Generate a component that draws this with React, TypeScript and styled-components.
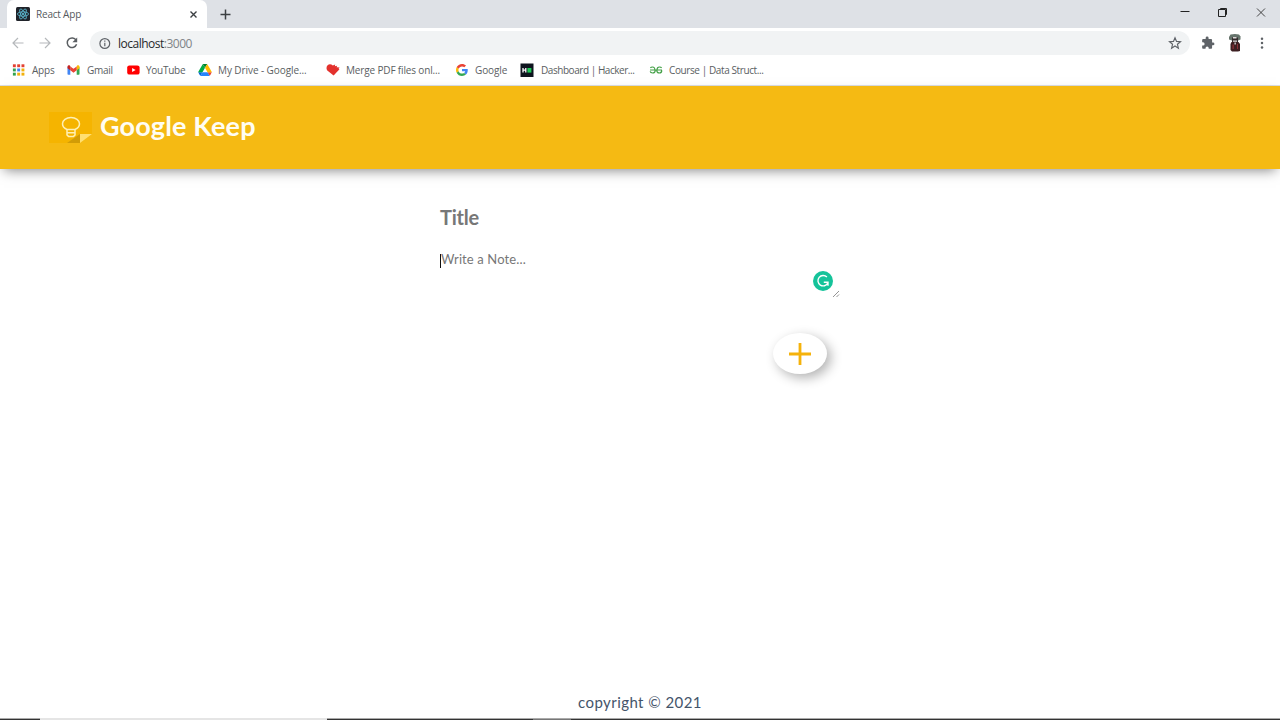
import React from "react";
import styled, { createGlobalStyle } from "styled-components";

const GlobalStyle = createGlobalStyle`
  * { box-sizing: border-box; }
  body { margin: 0; background: #fff; overflow: hidden; }
`;

const Window = styled.div`
  width: 1280px;
  height: 720px;
  display: flex;
  flex-direction: column;
  background: #fff;
  font-family: "Open Sans", "Noto Sans", sans-serif;
`;

const TabStrip = styled.div`
  height: 28px;
  display: flex;
  align-items: stretch;
  background: #dee1e6;
  flex: none;
`;

const Tab = styled.div`
  width: 200px;
  margin-left: 7px;
  padding: 0 9px;
  display: flex;
  align-items: center;
  background: #fff;
  border-radius: 7px 7px 0 0;
`;

const TabTitle = styled.span`
  flex: 1;
  margin-left: 6px;
  font-size: 10px;
  letter-spacing: -0.2px;
  line-height: 14px;
  color: #55595d;
`;

const NewTab = styled.div`
  width: 36px;
  display: flex;
  align-items: center;
  justify-content: center;
`;

const WindowButtons = styled.div`
  margin-left: auto;
  padding: 6px 13px 0 0;
  display: flex;
  gap: 26px;
`;

const Toolbar = styled.div`
  height: 30px;
  flex: none;
  display: flex;
  align-items: center;
  padding: 0 11px;
`;

const NavButtons = styled.div`
  display: flex;
  gap: 13px;
  width: 79px;
`;

const AddressBar = styled.div`
  width: 1100px;
  height: 24px;
  border-radius: 12px;
  background: #f1f3f4;
  display: flex;
  align-items: center;
  padding: 0 8px;
`;

const Address = styled.span`
  flex: 1;
  margin: 1px 0 0 7px;
  font-size: 12px;
  letter-spacing: -0.5px;
  line-height: 18px;
  color: #27292c;
`;

const Port = styled.span`
  color: #808488;
`;

const ToolbarActions = styled.div`
  flex: 1;
  display: flex;
  align-items: center;
  justify-content: space-between;
  padding-left: 11px;
`;

const BookmarksBar = styled.div`
  height: 28px;
  flex: none;
  display: flex;
  align-items: center;
  padding: 0 0 4px 12px;
  border-bottom: 1px solid #dcdfe4;
`;

const Bookmark = styled.div<{ $width: number; $gap: number; $track: number }>`
  width: ${(p) => p.$width}px;
  flex: none;
  display: flex;
  align-items: center;
  gap: ${(p) => p.$gap}px;
  font-size: 10px;
  letter-spacing: ${(p) => p.$track}px;
  line-height: 14px;
  white-space: nowrap;
  color: #5a5e62;
  svg { flex: none; }
`;

const Header = styled.header`
  height: 83px;
  flex: none;
  display: flex;
  align-items: center;
  gap: 8px;
  padding: 0 49px;
  background: #f5ba13;
  box-shadow: 0 5px 12px -4px rgba(0, 0, 0, 0.5);
`;

const BrandName = styled.h1`
  margin: -4px 0 0;
  font: 700 27px/34px Lato, sans-serif;
  letter-spacing: 0.15px;
  color: #fffdf3;
`;

const Main = styled.main`
  flex: 1;
  display: flex;
  justify-content: center;
`;

const NoteForm = styled.div`
  width: 400px;
  padding-top: 35px;
  display: flex;
  flex-direction: column;
`;

const TitleField = styled.div`
  font: 700 20px/26px Lato, sans-serif;
  letter-spacing: -0.2px;
  color: #777;
`;

const NoteField = styled.div`
  position: relative;
  height: 48px;
  margin-top: 20px;
  display: flex;
  align-items: flex-start;
  font: 400 13px/18px Lato, sans-serif;
  letter-spacing: 0.12px;
  color: #777;
`;

const Caret = styled.span`
  width: 1px;
  height: 14px;
  margin-top: 4px;
  background: #111;
`;

const Grammarly = styled.svg`
  position: absolute;
  right: 7px;
  bottom: 7px;
`;

const ResizeGrip = styled.svg`
  position: absolute;
  right: 0;
  bottom: 0;
`;

const AddButton = styled.div`
  width: 54px;
  height: 41px;
  margin: 35px 13px 0 auto;
  border-radius: 50%;
  background: #fff;
  box-shadow: 4px 4px 12px rgba(0, 0, 0, 0.3);
  display: flex;
  align-items: center;
  justify-content: center;
`;

const Footer = styled.footer`
  height: 25px;
  flex: none;
  text-align: center;
  font: 400 15px/18px Lato, sans-serif;
  letter-spacing: 0.44px;
  color: #44546a;
`;

const TaskbarEdge = styled.div`
  height: 2px;
  flex: none;
  display: flex;
  background: #333;
  border-top: 1px solid #aaa;
`;

const TaskbarSearch = styled.div`
  width: 287px;
  height: 2px;
  margin: -1px 0 0 40px;
  background: #e5e5e5;
`;

const TaskbarActiveApp = styled.div`
  width: 38px;
  height: 1px;
  margin-left: 206px;
  background: #777;
`;

const ReactIcon = () => (
  <svg width="14" height="14" viewBox="0 0 14 14">
    <rect width="14" height="14" rx="1.5" fill="#20232a" />
    <g fill="none" stroke="#61c6df" strokeWidth="0.75">
      <ellipse cx="7" cy="7" rx="5.6" ry="2.2" />
      <ellipse cx="7" cy="7" rx="5.6" ry="2.2" transform="rotate(60 7 7)" />
      <ellipse cx="7" cy="7" rx="5.6" ry="2.2" transform="rotate(120 7 7)" />
    </g>
    <circle cx="7" cy="7" r="1.1" fill="#61c6df" />
  </svg>
);

const dots = ["#e34133", "#e34133", "#e34133", "#32a350", "#4285f4", "#f2b10c", "#32a350", "#f2b10c", "#f2b10c"];
const AppsIcon = () => (
  <svg width="13" height="12" viewBox="0 0 13 12">
    {dots.map((c, i) => (
      <rect key={i} x={0.9 + (i % 3) * 4.3} y={0.3 + Math.floor(i / 3) * 4.2} width="2.9" height="2.9" fill={c} />
    ))}
  </svg>
);

const GmailIcon = () => (
  <svg width="13" height="10" viewBox="0 0 13 10">
    <path d="M.5 2v7c0 .5.3.8.8.8h2V4.3z" fill="#4285f4" />
    <path d="M12.5 2v7c0 .5-.3.8-.8.8h-2V4.3z" fill="#34a853" />
    <path d="M9.7 1.4v3.9l2.8-2.1V1.7c0-1.4-1.5-1.9-2.4-1.2z" fill="#fbbc04" />
    <path d="M3.3 5.3V1.4l3.2 2.4 3.2-2.4v3.9L6.5 7.7z" fill="#ea4335" />
    <path d="M.5 1.7v1.5l2.8 2.1V1.4L2.9.5C2-.2.5.3.5 1.7z" fill="#c5221f" />
  </svg>
);

const YouTubeIcon = () => (
  <svg width="13" height="10" viewBox="0 0 13 10">
    <rect x=".2" y=".4" width="12.4" height="9.2" rx="2.2" fill="#f00" />
    <path d="M5.1 3v4l3.5-2z" fill="#fff" />
  </svg>
);

const DriveIcon = () => (
  <svg width="14" height="12" viewBox="0 0 87.3 78">
    <path d="m6.6 66.85 3.85 6.65c.8 1.4 1.95 2.5 3.3 3.3l13.75-23.8h-27.5c0 1.55.4 3.1 1.2 4.5z" fill="#0066da" />
    <path d="m43.65 25-13.75-23.8c-1.35.8-2.5 1.9-3.3 3.3l-25.4 44a9 9 0 0 0-1.2 4.5h27.5z" fill="#00ac47" />
    <path d="m73.55 76.8c1.35-.8 2.5-1.9 3.3-3.3l1.6-2.75 7.65-13.25c.8-1.4 1.2-2.95 1.2-4.5h-27.5l5.85 11.5z" fill="#ea4335" />
    <path d="m43.65 25 13.75-23.8c-1.35-.8-2.9-1.2-4.5-1.2h-18.5c-1.6 0-3.15.45-4.5 1.2z" fill="#00832d" />
    <path d="m59.8 53h-32.3l-13.75 23.8c1.35.8 2.9 1.2 4.5 1.2h50.8c1.6 0 3.15-.45 4.5-1.2z" fill="#2684fc" />
    <path d="m73.4 26.5-12.7-22c-.8-1.4-1.95-2.5-3.3-3.3l-13.75 23.8 16.15 28h27.45c0-1.55-.4-3.1-1.2-4.5z" fill="#ffba00" />
  </svg>
);

const MergeIcon = () => (
  <svg width="14" height="12" viewBox="0 0 14 12">
    <path d="M1.6 1.2C3-.1 5.2 0 6.8 1.4L9.2.6l-.4 1.6 2.4-.4-.6 1.5 3 .1-1.100 1.500 1 .4-5.900 6.300-6-4.800C.2 5.600.1 2.700 1.600 1.200z" fill="#e3312d" />
  </svg>
);

const GoogleIcon = () => (
  <svg width="12" height="12" viewBox="0 0 48 48">
    <path fill="#EA4335" d="M24 9.5c3.54 0 6.71 1.22 9.21 3.6l6.85-6.85C35.9 2.38 30.47 0 24 0 14.62 0 6.51 5.38 2.56 13.22l7.98 6.19C12.43 13.72 17.74 9.5 24 9.5z" />
    <path fill="#4285F4" d="M46.98 24.55c0-1.57-.15-3.09-.38-4.55H24v9.02h12.94c-.58 2.96-2.26 5.48-4.78 7.18l7.73 6c4.51-4.18 7.09-10.36 7.09-17.65z" />
    <path fill="#FBBC05" d="M10.53 28.59A14.5 14.5 0 0 1 9.77 24c0-1.6.27-3.14.76-4.59l-7.98-6.19A23.9 23.9 0 0 0 0 24c0 3.88.92 7.54 2.56 10.78z" />
    <path fill="#34A853" d="M24 48c6.48 0 11.93-2.13 15.89-5.81l-7.73-6c-2.15 1.45-4.92 2.3-8.16 2.3-6.26 0-11.57-4.22-13.47-9.91l-7.98 6.19C6.51 42.62 14.62 48 24 48z" />
  </svg>
);

const HackerIcon = () => (
  <svg width="14" height="14" viewBox="0 0 14 14">
    <rect x=".5" y=".5" width="13" height="13.5" fill="#0e141e" />
    <path d="M3 5v4.500M5.800 5v4.500M3 7.200h3" stroke="#fff" strokeWidth="1.3" />
    <rect x="7.4" y="5" width="4" height="4.600" fill="#1ecb57" />
  </svg>
);

const GeeksIcon = () => (
  <svg width="14" height="8" viewBox="0 0 14 8" fill="none" stroke="#43a047" strokeWidth="1.2">
    <path d="M1 4h12M6.3 4c0 2-1 3-2.6 3S1.3 6.2 1.2 5.4M5.9 4C5.9 2 5 1 3.6 1S1.7 1.5 1.4 2.1M7.7 4c0 2 1 3 2.6 3s2.4-.8 2.5-2.6M8 4c0-2 1-3 2.4-3s1.9.5 2.2 1.1" />
  </svg>
);

const KeepIcon = () => (
  <svg width="43" height="31" viewBox="0 0 43 31">
    <path d="M0 0h43v22L31 31H0z" fill="#f5b400" />
    <path d="M31 22v9H18z" fill="#d29c06" />
    <path d="M31 22h12L31 31z" fill="#ffdf72" />
    <g fill="none" stroke="#fff0b4" strokeWidth="1.500">
      <path d="M18 17.500C15.200 16.300 13.500 14.200 13.500 11.800c0-3.500 3.700-6.200 8.500-6.200s8.500 2.700 8.500 6.200c0 2.400-1.700 4.500-4.500 5.700z" />
      <path d="M18 17v6l1.500 1.400h5L26 23v-6M18 20.800h8" />
    </g>
  </svg>
);

const bookmarks = [
  { label: "Apps", icon: <AppsIcon />, width: 55, gap: 7, track: -0.2 },
  { label: "Gmail", icon: <GmailIcon />, width: 60, gap: 7, track: -0.25 },
  { label: "YouTube", icon: <YouTubeIcon />, width: 71, gap: 6, track: -0.27 },
  { label: "My Drive - Google...", icon: <DriveIcon />, width: 128, gap: 6, track: -0.08 },
  { label: "Merge PDF files onl...", icon: <MergeIcon />, width: 130, gap: 6, track: -0.15 },
  { label: "Google", icon: <GoogleIcon />, width: 64, gap: 7, track: -0.1 },
  { label: "Dashboard | Hacker...", icon: <HackerIcon />, width: 129, gap: 7, track: -0.45 },
  { label: "Course | Data Struct...", icon: <GeeksIcon />, width: 120, gap: 6, track: -0.4 },
];

export default function App() {
  return (
    <Window>
      <GlobalStyle />
      <TabStrip>
        <Tab>
          <ReactIcon />
          <TabTitle>React App</TabTitle>
          <svg width="9" height="9" viewBox="0 0 9 9" stroke="#3c4043" strokeWidth="1.4"><path d="M1.5 1.5l6 6M7.5 1.5l-6 6" /></svg>
        </Tab>
        <NewTab>
          <svg width="11" height="11" viewBox="0 0 11 11" stroke="#3c4043" strokeWidth="1.5"><path d="M5.5 .5v10M.5 5.5h10" /></svg>
        </NewTab>
        <WindowButtons>
          <svg width="12" height="12" viewBox="0 0 12 12" stroke="#222"><path d="M1.500 5.5h9" /></svg>
          <svg width="12" height="12" viewBox="0 0 12 12" fill="none" stroke="#222"><path d="M1.5 3.5h7v7h-7zM3.500 3V2.500h6v6H9" /></svg>
          <svg width="12" height="12" viewBox="0 0 12 12" stroke="#333" strokeWidth=".9"><path d="M2 2.5l8 8M10 2.5l-8 8" /></svg>
        </WindowButtons>
      </TabStrip>
      <Toolbar>
        <NavButtons>
          <svg width="14" height="14" viewBox="0 0 14 14" fill="none" stroke="#b5b8bb" strokeWidth="1.2"><path d="M12.5 7H2.5M7 2L2 7l5 5" /></svg>
          <svg width="14" height="14" viewBox="0 0 14 14" fill="none" stroke="#b5b8bb" strokeWidth="1.2"><path d="M1.5 7h10M7 2l5 5-5 5" /></svg>
          <svg width="14" height="14" viewBox="0 0 14 14" fill="none" stroke="#5a5e62" strokeWidth="1.5"><path d="M11.1 4.1A4.8 4.8 0 1 0 11.6 8.3" /><path d="M12.2 1.4v4.8H7.4z" fill="#5a5e62" stroke="none" /></svg>
        </NavButtons>
        <AddressBar>
          <svg width="13" height="13" viewBox="0 0 13 13" fill="none" stroke="#5f6368" strokeWidth="1.2"><circle cx="6.8" cy="6.5" r="4.9" /><path d="M6.8 5.8v3.4M6.8 3.6v1.2" /></svg>
          <Address>localhost<Port>:3000</Port></Address>
          <svg width="14" height="14" viewBox="0 0 24 24" fill="none" stroke="#5f6368" strokeWidth="2"><path d="M12 3l2.6 6.3 6.8.5-5.2 4.4 1.6 6.6L12 17.2l-5.8 3.6 1.6-6.6-5.2-4.4 6.8-.5z" /></svg>
        </AddressBar>
        <ToolbarActions>
          <svg width="14" height="14" viewBox="0 0 24 24" fill="#5f6368"><path d="M20.5 11H19V7c0-1.1-.9-2-2-2h-4V3.500a2.500 2.500 0 0 0-5 0V5H4c-1.100 0-2 .9-2 2v3.800h1.500a2.700 2.700 0 0 1 0 5.400H2V20c0 1.100.9 2 2 2h3.800v-1.500a2.700 2.700 0 0 1 5.400 0V22H17c1.100 0 2-.9 2-2v-4h1.500a2.500 2.500 0 0 0 0-5z" /></svg>
          <svg width="14" height="18" viewBox="0 0 14 18">
            <path d="M2.500 .5Q7-.5 11 .5l1.500 2v3L10 6.500H4L1 5.500V3z" fill="#65736b" />
            <path d="M4 3.500h6v5H4z" fill="#332a2c" />
            <path d="M5 3h3.500v1.500H5zM5 6.500h4v1.200H5z" fill="#ded8d8" />
            <path d="M3.500 8h7l1.500 2v7l-2 .5H4L2.500 16v-6z" fill="#3d1f22" />
            <path d="M4.500 10.500h1.300V15H4.500zM9 10h1v5H9z" fill="#8a3036" />
            <path d="M6.500 8.500h1.300v2H6.500z" fill="#ddd" />
          </svg>
          <svg width="14" height="14" viewBox="0 0 14 14" fill="#5f6368"><circle cx="7" cy="2.800" r="1.250" /><circle cx="7" cy="7.100" r="1.250" /><circle cx="7" cy="11.400" r="1.250" /></svg>
        </ToolbarActions>
      </Toolbar>
      <BookmarksBar>
        {bookmarks.map((b) => (
          <Bookmark key={b.label} $width={b.width} $gap={b.gap} $track={b.track}>
            {b.icon}
            <span>{b.label}</span>
          </Bookmark>
        ))}
      </BookmarksBar>
      <Header>
        <KeepIcon />
        <BrandName>Google Keep</BrandName>
      </Header>
      <Main>
        <NoteForm>
          <TitleField>Title</TitleField>
          <NoteField>
            <Caret />
            <span>Write a Note...</span>
            <Grammarly width="20" height="20" viewBox="0 0 20 20">
              <circle cx="10" cy="10" r="10" fill="#15c39a" />
              <path d="M13.900 6.100A5.200 5.200 0 1 0 14.800 12M10.800 11.200H15v3.600" fill="none" stroke="#fff" strokeWidth="1.400" />
            </Grammarly>
            <ResizeGrip width="8" height="8" viewBox="0 0 8 8" stroke="#888" strokeWidth=".9">
              <path d="M1 7l6-6M4.500 7l2.500-2.500" />
            </ResizeGrip>
          </NoteField>
          <AddButton>
            <svg width="22" height="22" viewBox="0 0 22 22" stroke="#f5b20b" strokeWidth="2.800"><path d="M11 0v22M0 11h22" /></svg>
          </AddButton>
        </NoteForm>
      </Main>
      <Footer>copyright © 2021</Footer>
      <TaskbarEdge>
        <TaskbarSearch />
        <TaskbarActiveApp />
      </TaskbarEdge>
    </Window>
  );
}
